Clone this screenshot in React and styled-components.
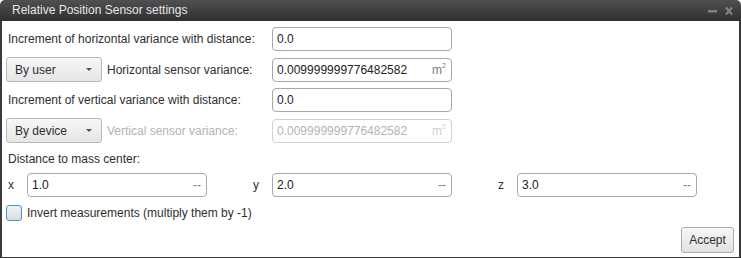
import React from "react";
import styled, { createGlobalStyle } from "styled-components";

const GlobalStyle = createGlobalStyle`
    html, body {
        margin: 0;
        padding: 0;
        background: #fff;
    }
    body {
        font-family: "Liberation Sans", Arial, sans-serif;
        font-size: 12px;
        color: #2e2e2e;
    }
`;

const Window = styled.div`
    width: 741px;
    height: 258px;
    box-sizing: border-box;
    display: flex;
    flex-direction: column;
`;

const TitleBar = styled.div`
    height: 21px;
    flex-shrink: 0;
    display: flex;
    align-items: center;
    justify-content: space-between;
    padding: 0 7px 0 12px;
    border-radius: 5px 5px 0 0;
    background: linear-gradient(#505050, #2f2f2f);
    color: #e6e6e6;
`;

const Title = styled.span`
    font-size: 12px;
    line-height: 21px;
`;

const Body = styled.div`
    flex: 1;
    display: flex;
    flex-direction: column;
    border: 2px solid #3a3a3a;
    border-top: none;
    padding: 6px 5px 4px 4px;
    background: #fff;
`;

const FormGrid = styled.div`
    display: grid;
    grid-template-columns: 266px 180px;
    grid-auto-rows: 24px;
    row-gap: 6.5px;
    align-items: center;
`;

const LeftCell = styled.div`
    display: flex;
    align-items: center;
    gap: 5px;
    height: 100%;
`;

const Label = styled.span`
    padding-left: ${p => (p.$inset ? "2px" : "0")};
    color: ${p => (p.$disabled ? "#b3b3b3" : "#2e2e2e")};
    white-space: nowrap;
`;

const Dropdown = styled.button`
    width: 96px;
    height: 25px;
    box-sizing: border-box;
    display: flex;
    align-items: center;
    justify-content: space-between;
    padding: 0 9px 0 8px;
    border: 1px solid #b9b9b9;
    border-radius: 3px;
    background: linear-gradient(#f7f7f7, #e5e5e5);
    font-family: inherit;
    font-size: 12px;
    color: #2e2e2e;
`;

const Caret = styled.span`
    width: 0;
    height: 0;
    border-left: 3px solid transparent;
    border-right: 3px solid transparent;
    border-top: 3px solid #555;
`;

const FieldBox = styled.div`
    width: 180px;
    height: 24px;
    box-sizing: border-box;
    display: flex;
    align-items: center;
    padding: 0 5px 0 4px;
    border: 1px solid ${p => (p.$disabled ? "#d2d2d2" : "#a8a8a8")};
    border-radius: 4px;
    background: #fff;
`;

const FieldInput = styled.input`
    flex: 1;
    min-width: 0;
    border: none;
    outline: none;
    padding: 0;
    background: transparent;
    font-family: "Liberation Sans", Arial, sans-serif;
    font-size: 12px;
    color: ${p => (p.disabled ? "#b3b3b3" : "#222")};
`;

const Unit = styled.span`
    font-size: 12px;
    color: ${p => (p.$disabled ? "#cfcfcf" : "#7a7a7a")};

    sup {
        font-size: 7px;
        vertical-align: 6px;
    }
`;

const SectionLabel = styled.div`
    margin-top: 8.5px;
    line-height: 16px;
    padding-left: 2px;
`;

const CoordRow = styled.div`
    margin-top: 6px;
    display: flex;
    gap: 44px;
`;

const CoordGroup = styled.div`
    display: flex;
    align-items: center;
`;

const AxisLabel = styled.span`
    width: 21px;
    padding-left: 2px;
    box-sizing: border-box;
`;

const CheckRow = styled.label`
    margin-top: 8px;
    display: flex;
    align-items: center;
    gap: 5px;
    line-height: 16px;
`;

const CheckBox = styled.span`
    width: 16px;
    height: 16px;
    box-sizing: border-box;
    border: 1.5px solid #3a9ad9;
    border-radius: 3px;
    background: linear-gradient(#f2f2f2, #dcdcdc);
`;

const Footer = styled.div`
    margin-top: 6px;
    display: flex;
    justify-content: flex-end;
`;

const AcceptButton = styled.button`
    width: 53px;
    height: 26px;
    box-sizing: border-box;
    border: 1px solid #adadad;
    border-radius: 3px;
    background: linear-gradient(#f8f8f8, #e1e1e1);
    font-family: inherit;
    font-size: 12px;
    color: #2e2e2e;
    padding: 0;
`;

const WindowControls = () => (
    <svg width="26" height="10" viewBox="0 0 26 10">
        <rect x="0" y="4" width="9" height="2.5" fill="#828282" />
        <path d="M18 1.5 L24 8.5 M24 1.5 L18 8.5" stroke="#828282" strokeWidth="2.2" />
    </svg>
);

const Field = ({ value, unit, disabled }) => (
    <FieldBox $disabled={disabled}>
        <FieldInput readOnly disabled={disabled} value={value} />
        {unit === "m2" && (
            <Unit $disabled={disabled}>
                m<sup>2</sup>
            </Unit>
        )}
        {unit === "--" && <Unit>--</Unit>}
    </FieldBox>
);

const coords = [
    { axis: "x", value: "1.0" },
    { axis: "y", value: "2.0" },
    { axis: "z", value: "3.0" }
];

export default function App() {
    return (
        <Window>
            <GlobalStyle />
            <TitleBar>
                <Title>Relative Position Sensor settings</Title>
                <WindowControls />
            </TitleBar>
            <Body>
                <FormGrid>
                    <LeftCell>
                        <Label $inset>Increment of horizontal variance with distance:</Label>
                    </LeftCell>
                    <Field value="0.0" />

                    <LeftCell>
                        <Dropdown>
                            By user
                            <Caret />
                        </Dropdown>
                        <Label>Horizontal sensor variance:</Label>
                    </LeftCell>
                    <Field value="0.009999999776482582" unit="m2" />

                    <LeftCell>
                        <Label $inset>Increment of vertical variance with distance:</Label>
                    </LeftCell>
                    <Field value="0.0" />

                    <LeftCell>
                        <Dropdown>
                            By device
                            <Caret />
                        </Dropdown>
                        <Label $disabled>Vertical sensor variance:</Label>
                    </LeftCell>
                    <Field value="0.009999999776482582" unit="m2" disabled />
                </FormGrid>

                <SectionLabel>Distance to mass center:</SectionLabel>
                <CoordRow>
                    {coords.map(c => (
                        <CoordGroup key={c.axis}>
                            <AxisLabel>{c.axis}</AxisLabel>
                            <Field value={c.value} unit="--" />
                        </CoordGroup>
                    ))}
                </CoordRow>

                <CheckRow>
                    <CheckBox />
                    Invert measurements (multiply them by -1)
                </CheckRow>

                <Footer>
                    <AcceptButton>Accept</AcceptButton>
                </Footer>
            </Body>
        </Window>
    );
}
